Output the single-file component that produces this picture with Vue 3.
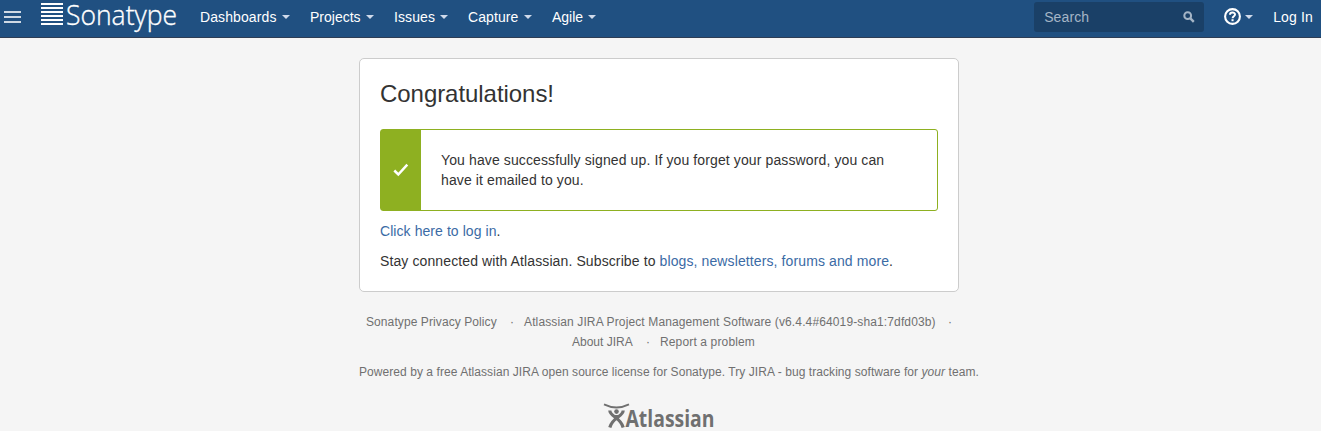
<script setup>
const menus = [
  { label: 'Dashboards', cls: 'dashboards' },
  { label: 'Projects', cls: 'projects' },
  { label: 'Issues', cls: 'issues' },
  { label: 'Capture', cls: 'capture' },
  { label: 'Agile', cls: 'agile' },
]
</script>

<template>
  <div class="page">
    <header class="header">
      <svg class="burger" width="17" height="12" viewBox="0 0 17 12">
        <path d="M0 1h17M0 6h17M0 11h17" stroke="#cfd9e4" stroke-width="2" />
      </svg>
      <svg class="brand" width="140" height="38" viewBox="0 0 140 38">
        <path d="M1 4h22M1 8h22M1 12h22M1 16h22M1 20h22M1 24h22" stroke="#fff" stroke-width="2" />
        <text x="26" y="24.5" textLength="111" lengthAdjust="spacingAndGlyphs">Sonatype</text>
      </svg>
      <nav class="nav">
        <a v-for="m in menus" :key="m.label" :class="['menu', m.cls]">{{ m.label }}<i class="caret"></i></a>
      </nav>
      <div class="search">
        <span>Search</span>
        <svg width="12" height="12" viewBox="0 0 12 12" fill="none" stroke="#a5b5c6" stroke-width="2">
          <circle cx="4.7" cy="4.7" r="3.4" />
          <path d="M7.4 7.4l3.4 3.4" stroke-width="2.4" />
        </svg>
      </div>
      <div class="help">
        <svg width="17" height="17" viewBox="0 0 17 17" fill="none" stroke="#fff">
          <circle cx="8.5" cy="8.5" r="7.4" stroke-width="2.1" />
          <path d="M6 6.8C6 3.8 11 3.9 11 6.5C11 8.3 8.6 8.2 8.6 10.3" stroke-width="2" />
          <path d="M7.5 12.2h2.1" stroke-width="2" />
        </svg>
        <i class="caret"></i>
      </div>
      <a class="login">Log In</a>
    </header>

    <main class="card">
      <h1>Congratulations!</h1>
      <div class="message">
        <div class="stripe">
          <svg width="16" height="14" viewBox="0 0 16 14" fill="none" stroke="#fff" stroke-width="2.5">
            <path d="M1.3 7.5l4 4L14.3 1.7" />
          </svg>
        </div>
        <p>You have successfully signed up. If you forget your password, you can<br />have it emailed to you.</p>
      </div>
      <p class="line signin"><a>Click here to log in</a>.</p>
      <p class="line">Stay connected with Atlassian. Subscribe to <a>blogs, newsletters, forums and more</a>.</p>
    </main>

    <footer class="footer">
      <div class="row first">
        <span class="privacy">Sonatype Privacy Policy</span><b>·</b>
        <span class="version">Atlassian JIRA Project Management Software (v6.4.4#64019-sha1:7dfd03b)</span><b>·</b>
      </div>
      <div class="row second">
        <span class="about">About JIRA</span><b>·</b><span class="report">Report a problem</span>
      </div>
      <p class="license">Powered by a free Atlassian JIRA open source license for Sonatype. Try JIRA - bug tracking software for <em>your</em> team.</p>
      <svg class="atlassian" width="112" height="28" viewBox="0 0 112 28">
        <g fill="none" stroke="#707070">
          <path d="M1 1.4Q13.5 7.6 26 1.4" stroke-width="1.8" />
          <circle cx="13.5" cy="8.6" r="2.3" fill="#707070" stroke="none" />
          <path d="M6.8 7.5C7.2 14 17.5 14 20.2 24.5" stroke-width="3.2" />
          <path d="M20.2 7.5C19.8 14 9.5 14 6.8 24.5" stroke-width="3.2" />
          <path d="M13.5 12v5" stroke-width="4" />
        </g>
        <text x="22.5" y="24" textLength="89" lengthAdjust="spacingAndGlyphs">Atlassian</text>
      </svg>
    </footer>
  </div>
</template>

<style>
body {
  background: #f5f5f5;
  overflow: hidden;
}
</style>

<style scoped>
.page {
  height: 431px;
  overflow: hidden;
  background: #f5f5f5;
  font: 14px/20px "Liberation Sans", Arial, sans-serif;
  color: #333;
}
.header {
  box-sizing: border-box;
  height: 38px;
  display: flex;
  align-items: center;
  background: #205081;
  border-bottom: 1px solid #2e3d54;
  color: #fff;
  white-space: nowrap;
}
.burger {
  margin: -3px 0 0 4px;
  flex: none;
}
.brand {
  margin-left: 19px;
  flex: none;
  overflow: visible;
}
.brand text {
  font: 300 28px "Open Sans", sans-serif;
  fill: #fff;
  stroke: #fff;
  stroke-width: 0.35px;
}
.nav {
  display: flex;
  margin: -3px 0 0 20px;
}
.menu {
  flex: none;
}
.dashboards {
  width: 110px;
  letter-spacing: 0.1px;
}
.projects { width: 84px; }
.issues { width: 74px; letter-spacing: 0.1px; }
.capture { width: 84px; letter-spacing: 0.1px; }
.agile { width: 60px; }
.caret {
  display: inline-block;
  border: 4px solid transparent;
  border-top-color: #cfdaeb;
  border-bottom: 0;
  margin-left: 5px;
  vertical-align: 3px;
}
.search {
  box-sizing: border-box;
  width: 170px;
  height: 30px;
  margin: -3px 0 0 auto;
  padding: 0 9px 0 10px;
  display: flex;
  align-items: center;
  justify-content: space-between;
  background: #1a4067;
  border-radius: 3px;
  color: #a5b5c6;
  letter-spacing: 0.1px;
}
.help {
  display: flex;
  align-items: center;
  margin: -4px 0 0 20px;
}
.help .caret {
  margin-left: 4px;
}
.login {
  margin: -3px 8px 0 20px;
  letter-spacing: 0.15px;
}
.card {
  box-sizing: border-box;
  width: 600px;
  height: 234px;
  margin: 20px 0 0 359px;
  padding: 20px;
  background: #fff;
  border: 1px solid #ccc;
  border-radius: 5px;
}
h1 {
  margin: 0;
  font-size: 24px;
  font-weight: 400;
  line-height: 30px;
  letter-spacing: -0.05px;
}
.message {
  box-sizing: border-box;
  height: 82px;
  margin-top: 20px;
  display: flex;
  border: 1px solid #8eb021;
  border-radius: 3px;
}
.stripe {
  width: 40px;
  display: flex;
  align-items: center;
  justify-content: center;
  background: #8eb021;
}
.message p {
  margin: 20px 0 0 20px;
  white-space: nowrap;
  letter-spacing: 0.115px;
}
.line {
  margin: 10px 0 0;
  letter-spacing: 0.11px;
}
.signin {
  letter-spacing: 0.07px;
}
.line a {
  color: #3b6ba5;
}
.footer {
  font-size: 12px;
  color: #707070;
  white-space: nowrap;
}
.row {
  display: flex;
}
.row b {
  font-weight: 400;
}
.first {
  margin: 20px 0 0 366px;
}
.first b {
  width: 14px;
}
.privacy {
  width: 144px;
  letter-spacing: 0.09px;
}
.version {
  width: 424px;
  letter-spacing: 0.125px;
}
.second {
  margin-left: 572px;
}
.second b {
  width: 14px;
}
.about { width: 74px; }
.report { letter-spacing: 0.14px; }
.license {
  margin: 10px 0 0 359px;
  letter-spacing: 0.06px;
}
.atlassian {
  display: block;
  margin: 21px 0 0 603px;
  overflow: visible;
}
.atlassian text {
  font: 700 22.5px "Open Sans", sans-serif;
  fill: #707070;
}
</style>
